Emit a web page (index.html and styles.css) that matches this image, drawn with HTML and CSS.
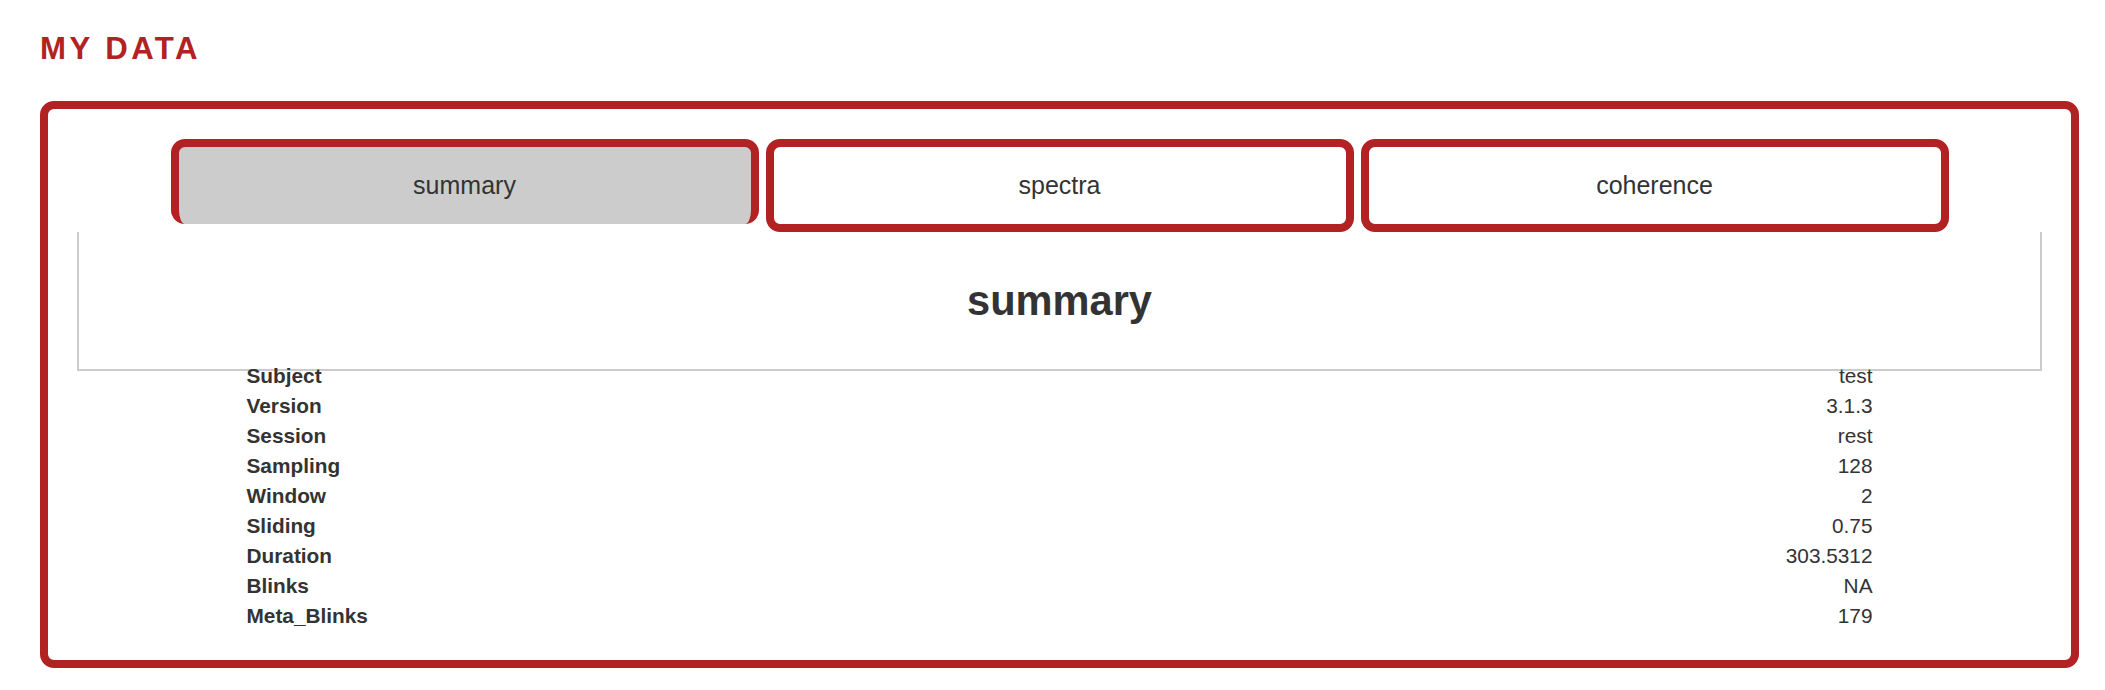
FILE: index.html
```html
<!DOCTYPE html>
<html lang="en">
<head>
<meta charset="utf-8">
<title>My Data</title>
<link rel="stylesheet" href="styles.css">
</head>
<body>
  <h2 class="page-title">MY DATA</h2>
  <div class="data-box">
    <div class="tabs">
      <div class="tab tab-active">summary</div>
      <div class="tab">spectra</div>
      <div class="tab">coherence</div>
    </div>
    <div class="panel">
      <h1 class="panel-heading">summary</h1>
    </div>
    <table class="summary-table">
      <tbody>
        <tr><td class="label">Subject</td><td class="value">test</td></tr>
        <tr><td class="label">Version</td><td class="value">3.1.3</td></tr>
        <tr><td class="label">Session</td><td class="value">rest</td></tr>
        <tr><td class="label">Sampling</td><td class="value">128</td></tr>
        <tr><td class="label">Window</td><td class="value">2</td></tr>
        <tr><td class="label">Sliding</td><td class="value">0.75</td></tr>
        <tr><td class="label">Duration</td><td class="value">303.5312</td></tr>
        <tr><td class="label">Blinks</td><td class="value">NA</td></tr>
        <tr><td class="label">Meta_Blinks</td><td class="value">179</td></tr>
      </tbody>
    </table>
  </div>
</body>
</html>
```

FILE: styles.css
```css
* {
  box-sizing: border-box;
}

html, body {
  background: #ffffff;
}

body {
  margin: 0;
  padding: 31px 26px 0 40px;
  font-family: "Liberation Sans", Arial, sans-serif;
  color: #333333;
  font-size: 20.8px;
}

.page-title {
  margin: 0 0 34px 0;
  font-size: 31.2px;
  line-height: 36px;
  font-weight: bold;
  letter-spacing: 3.45px;
  color: #b22222;
}

.data-box {
  width: 2039px;
  border: 8px solid #b22222;
  border-radius: 14px;
  padding: 30px 29px 29px 29px;
}

.tabs {
  display: flex;
  justify-content: center;
  align-items: flex-start;
  gap: 7px;
}

.tab {
  width: 588px;
  height: 93px;
  border: 8px solid #b22222;
  border-radius: 14px;
  background: #ffffff;
  display: flex;
  align-items: center;
  justify-content: center;
  font-size: 25px;
  color: #333333;
}

.tab-active {
  height: 85px;
  border-bottom: none;
  background: #cccccc;
}

.panel {
  height: 139px;
  padding-top: 45px;
  border: 2px solid #cccccc;
  border-top: none;
}

.panel-heading {
  margin: 0;
  font-size: 41.6px;
  line-height: 48px;
  font-weight: bold;
  text-align: center;
  color: #333333;
}

.summary-table {
  width: 1626px;
  margin: -10px auto 0 auto;
  border-collapse: collapse;
  font-size: 20.8px;
  color: #333333;
}

.summary-table td {
  padding: 3px 0;
  line-height: 24px;
}

.summary-table .label {
  font-weight: bold;
  text-align: left;
}

.summary-table .value {
  text-align: right;
}
```
